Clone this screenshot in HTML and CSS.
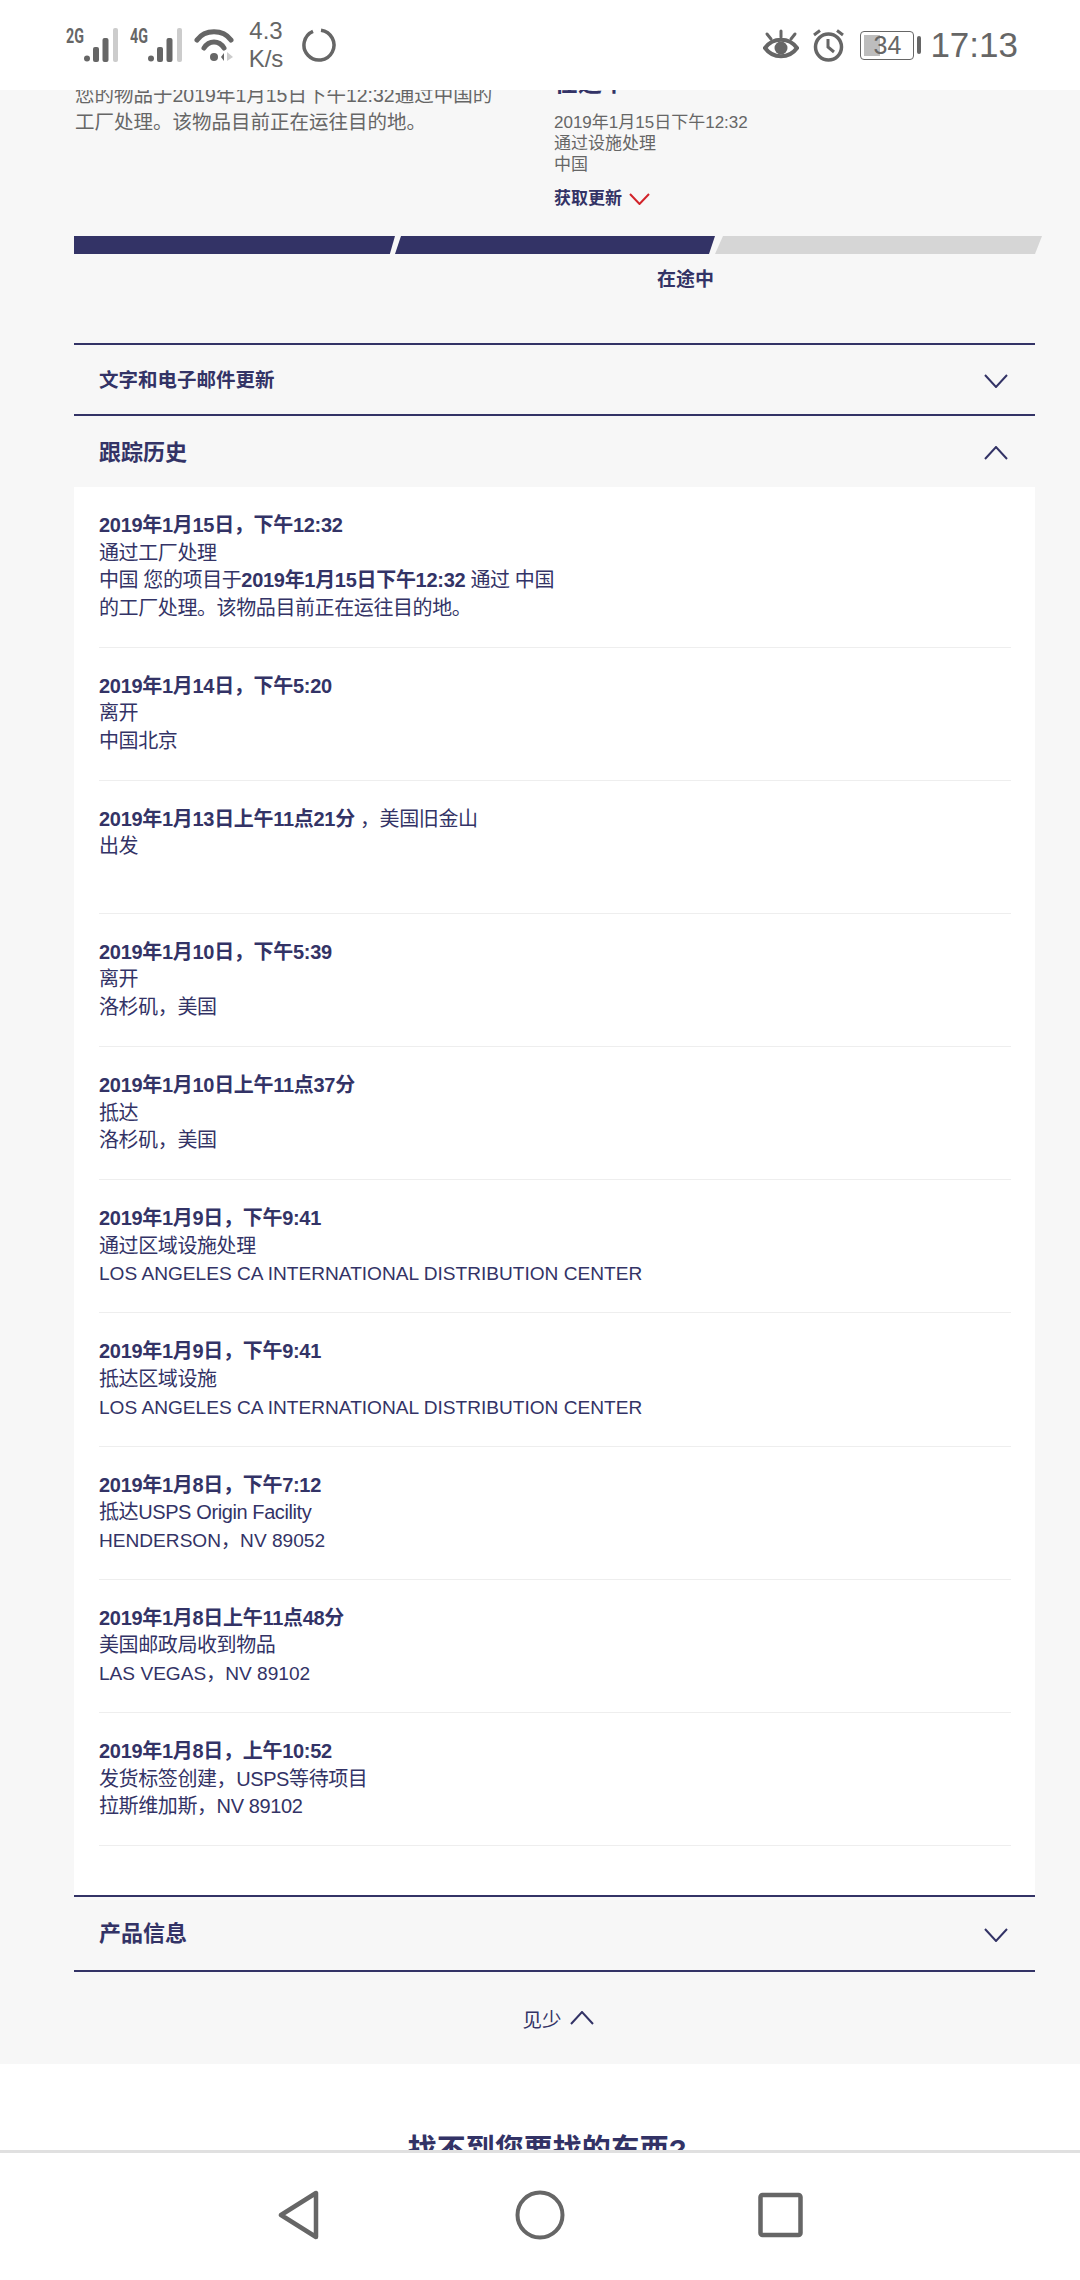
FILE: index.html
```html
<!DOCTYPE html>
<html lang="zh-CN">
<head>
    <meta charset="UTF-8">
    <meta name="viewport" content="width=device-width, initial-scale=1.0">
    <title>跟踪历史</title>
    <link rel="stylesheet" href="styles.css">
</head>
<body>
    <div class="phone">
        <!-- 状态栏 -->
        <header class="status-bar">
            <div class="status-left">
                <div class="sim">
                    <span class="sim-label">2G</span>
                    <svg class="signal" viewBox="0 0 36 34"><g fill="#666"><circle cx="3" cy="30.500" r="3"/><rect x="9" y="19" width="6" height="15" rx="2"/><rect x="18.500" y="10" width="6" height="24" rx="2"/></g><rect x="29" y="0" width="5" height="34" rx="2" fill="#ccc"/></svg>
                </div>
                <div class="sim">
                    <span class="sim-label">4G</span>
                    <svg class="signal" viewBox="0 0 36 34"><g fill="#666"><circle cx="3" cy="30.500" r="3"/><rect x="9" y="19" width="6" height="15" rx="2"/><rect x="18.500" y="10" width="6" height="24" rx="2"/></g><rect x="29" y="0" width="5" height="34" rx="2" fill="#ccc"/></svg>
                </div>
                <svg class="wifi" viewBox="0 0 40 34">
                    <g fill="none" stroke="#666" stroke-width="5" stroke-linecap="round">
                        <path d="M3 12C11 1 29 1 37 12"/>
                        <path d="M10 20C15 12 25 12 30 20"/>
                    </g>
                    <circle cx="20" cy="29" r="4" fill="#666"/>
                    <path d="M30 33V25L27 29Z" fill="#666"/>
                    <path d="M33 33V24L39 29Z" fill="#ccc"/>
                </svg>
                <div class="net-speed">4.3<br>K/s</div>
                <svg class="spinner" viewBox="0 0 34 34"><path d="M19 2.200A15 15 0 1 1 11 3.300" fill="none" stroke="#666" stroke-width="3.500"/></svg>
            </div>
            <div class="status-right">
                <svg class="eye" viewBox="0 0 36 32">
                    <path d="M2 19C10 8 26 8 34 19C26 30 10 30 2 19Z" fill="none" stroke="#666" stroke-width="4"/>
                    <circle cx="18" cy="19" r="6.500" fill="#666"/>
                    <g stroke="#666" stroke-width="3" stroke-linecap="round"><path d="M18 2V8"/><path d="M4 5L8 10"/><path d="M32 5L28 10"/></g>
                </svg>
                <svg class="alarm" viewBox="0 0 33 33">
                    <circle cx="16.500" cy="18" r="13" fill="none" stroke="#666" stroke-width="3.500"/>
                    <path d="M16 10V18L22 23" fill="none" stroke="#666" stroke-width="3"/>
                    <path d="M2 6L8 1.500M31 6L25 1.500" fill="none" stroke="#666" stroke-width="3"/>
                </svg>
                <div class="battery">
                    <div class="battery-body"><div class="battery-level"></div><span class="battery-num">34</span></div>
                    <div class="battery-nub"></div>
                </div>
                <div class="clock">17:13</div>
            </div>
        </header>

        <main class="viewport">
            <div class="page">
                <section class="shipment">
                    <div class="summary">
                        <p class="summary-text">您的物品于2019年1月15日下午12:32通过中国的工厂处理。该物品目前正在运往目的地。</p>
                        <div class="latest">
                            <h2 class="latest-title">在途中</h2>
                            <p class="latest-info">2019年1月15日下午12:32<br>通过设施处理<br>中国</p>
                            <a class="updates-link">获取更新
                                <svg class="chev-red" viewBox="0 0 21 12"><path d="M1 1L10.500 11L20 1" fill="none" stroke="#d2232a" stroke-width="2"/></svg>
                            </a>
                        </div>
                    </div>

                    <div class="progress">
                        <div class="seg seg-first"></div>
                        <div class="seg seg-mid"></div>
                        <div class="seg seg-last"></div>
                    </div>
                    <div class="progress-label">在途中</div>

                    <div class="acc-head acc-small">
                        <span>文字和电子邮件更新</span>
                        <svg class="chev" viewBox="0 0 24 14"><path d="M1 1L12 13L23 1" fill="none" stroke="#333366" stroke-width="2"/></svg>
                    </div>
                    <div class="acc-head acc-open">
                        <span>跟踪历史</span>
                        <svg class="chev" viewBox="0 0 24 14"><path d="M1 13L12 1L23 13" fill="none" stroke="#333366" stroke-width="2"/></svg>
                    </div>

                    <div class="history">
                        <div class="event event-first">
                            <strong>2019年1月15日，下午12:32</strong><br>
                            通过工厂处理<br>
                            中国 您的项目于<strong>2019年1月15日下午12:32</strong> 通过 中国<br>
                            的工厂处理。该物品目前正在运往目的地。
                        </div>
                        <div class="event"><strong>2019年1月14日，下午5:20</strong><br>离开<br>中国北京</div>
                        <div class="event"><strong>2019年1月13日上午11点21分</strong> ，美国旧金山<br>出发<br>&nbsp;</div>
                        <div class="event"><strong>2019年1月10日，下午5:39</strong><br>离开<br>洛杉矶，美国</div>
                        <div class="event"><strong>2019年1月10日上午11点37分</strong><br>抵达<br>洛杉矶，美国</div>
                        <div class="event"><strong>2019年1月9日，下午9:41</strong><br>通过区域设施处理<br><span class="addr">LOS ANGELES CA INTERNATIONAL DISTRIBUTION CENTER</span></div>
                        <div class="event"><strong>2019年1月9日，下午9:41</strong><br>抵达区域设施<br><span class="addr">LOS ANGELES CA INTERNATIONAL DISTRIBUTION CENTER</span></div>
                        <div class="event"><strong>2019年1月8日，下午7:12</strong><br>抵达USPS Origin Facility<br><span class="addr">HENDERSON，NV 89052</span></div>
                        <div class="event"><strong>2019年1月8日上午11点48分</strong><br>美国邮政局收到物品<br><span class="addr">LAS VEGAS，NV 89102</span></div>
                        <div class="event"><strong>2019年1月8日，上午10:52</strong><br>发货标签创建，USPS等待项目<br>拉斯维加斯，NV 89102</div>
                    </div>

                    <div class="acc-head acc-product">
                        <span>产品信息</span>
                        <svg class="chev" viewBox="0 0 24 14"><path d="M1 1L12 13L23 1" fill="none" stroke="#333366" stroke-width="2"/></svg>
                    </div>
                    <div class="see-less">
                        见少
                        <svg class="chev" viewBox="0 0 24 14"><path d="M1 13L12 1L23 13" fill="none" stroke="#333366" stroke-width="2"/></svg>
                    </div>
                </section>

                <section class="help">
                    <h2>找不到您要找的东西?</h2>
                </section>
            </div>
        </main>

        <!-- 导航栏 -->
        <nav class="nav-bar">
            <svg class="nav-back" viewBox="0 0 41 50"><path d="M38 3V47L3 25Z" fill="none" stroke="#666" stroke-width="4.500" stroke-linejoin="round"/></svg>
            <svg class="nav-home" viewBox="0 0 50 50"><circle cx="25" cy="25" r="22.500" fill="none" stroke="#666" stroke-width="4"/></svg>
            <svg class="nav-recent" viewBox="0 0 45 46"><rect x="2.500" y="3" width="40" height="40" rx="2" fill="none" stroke="#666" stroke-width="4.500"/></svg>
        </nav>
    </div>
</body>
</html>
```
FILE: styles.css
```css
* {
    box-sizing: border-box;
}

body {
    margin: 0;
    background-color: #ffffff;
    font-family: "Liberation Sans", "Noto Sans CJK SC", sans-serif;
    color: #333366;
}

.phone {
    display: flex;
    flex-direction: column;
    width: 1080px;
    height: 2280px;
    overflow: hidden;
}

/* status bar */
.status-bar {
    flex: 0 0 90px;
    display: flex;
    justify-content: space-between;
    align-items: center;
    padding: 0 62px 0 66px;
    background-color: #ffffff;
    color: #666666;
}

.status-left,
.status-right {
    display: flex;
    align-items: center;
}

.sim {
    display: flex;
    align-items: flex-start;
    width: 64px;
    height: 34px;
}

.sim-label {
    width: 18px;
    font-family: "Roboto", sans-serif;
    font-size: 21px;
    line-height: 17px;
    font-weight: 700;
    transform: scaleX(0.68);
    transform-origin: left top;
    white-space: nowrap;
}

.signal {
    width: 36px;
    height: 34px;
}

.wifi {
    width: 40px;
    height: 34px;
}

.net-speed {
    width: 54px;
    margin-left: 5px;
    font-size: 24px;
    line-height: 28px;
    text-align: center;
}

.spinner {
    width: 34px;
    height: 34px;
    margin-left: 9px;
}

.eye {
    width: 36px;
    height: 32px;
}

.alarm {
    width: 33px;
    height: 33px;
    margin-left: 13px;
}

.battery {
    display: flex;
    align-items: center;
    margin-left: 15px;
}

.battery-body {
    position: relative;
    width: 54px;
    height: 29px;
    border: 1.5px solid #666666;
    border-radius: 4px;
    padding: 3px;
}

.battery-level {
    width: 34%;
    height: 100%;
    background-color: #bdbdbd;
}

.battery-num {
    position: absolute;
    top: 0;
    left: 0;
    width: 100%;
    text-align: center;
    font-size: 25px;
    line-height: 27px;
}

.battery-nub {
    width: 4px;
    height: 18px;
    margin-left: 3px;
    border-radius: 2px;
    background-color: #666666;
}

.clock {
    margin-left: 9px;
    font-size: 35px;
    line-height: 42px;
}

/* scrolled area */
.viewport {
    flex: 1;
    overflow: hidden;
}

.page {
    margin-top: -25px;
}

.shipment {
    height: 1999px;
    padding: 0 45px 0 74px;
    background-color: #f7f7f7;
}

.summary {
    display: flex;
    height: 145px;
}

.summary-text {
    width: 430px;
    margin: 0 50px 0 0;
    padding: 17px 0 0 1px;
    font-size: 19.500px;
    line-height: 27px;
    color: #666666;
}

.latest {
    flex: 1;
}

.latest-title {
    margin: 0 0 11px;
    font-size: 24px;
    line-height: 36px;
    font-weight: 700;
}

.latest-info {
    margin: 0;
    font-size: 17px;
    line-height: 21px;
    color: #666666;
}

.updates-link {
    display: flex;
    align-items: center;
    gap: 7px;
    margin-top: 12px;
    font-size: 17px;
    line-height: 24px;
    font-weight: 700;
}

.chev-red {
    width: 21px;
    height: 12px;
}

/* progress */
.progress {
    display: flex;
    height: 18px;
    margin: 26px -7px 0 0;
}

.seg {
    height: 18px;
    background-color: #333366;
}

.seg-first {
    width: 321px;
    clip-path: polygon(0 0, 100% 0, 98.4% 100%, 0 100%);
}

.seg-mid {
    width: 320px;
    clip-path: polygon(6px 0, 100% 0, 314px 100%, 0 100%);
}

.seg-last {
    width: 327px;
    background-color: #d6d6d6;
    clip-path: polygon(8px 0, 100% 0, 320px 100%, 0 100%);
}

.progress-label {
    width: 640px;
    margin-top: 14px;
    font-size: 19px;
    line-height: 24px;
    font-weight: 700;
    text-align: right;
}

/* accordion */
.acc-head {
    display: flex;
    justify-content: space-between;
    align-items: center;
    padding: 0 27px 0 25px;
    border-top: 2px solid #333366;
    font-size: 22px;
    font-weight: 700;
}

.acc-head span {
    padding-bottom: 3px;
}

.acc-head .chev {
    margin-top: 2px;
}

.acc-small {
    height: 71px;
    margin-top: 51px;
    font-size: 19.500px;
}

.acc-open {
    height: 73px;
}

.acc-product {
    height: 75px;
}

.acc-product span {
    padding-bottom: 5px;
}

.chev {
    width: 24px;
    height: 14px;
}

.history {
    height: 1408px;
    padding: 0 24px 0 25px;
    background-color: #ffffff;
}

.event {
    height: 133.200px;
    padding-top: 25px;
    border-bottom: 1px solid #eeeeee;
    font-size: 20px;
    line-height: 27.600px;
    letter-spacing: -0.4px;
}

.event-first {
    height: 160.500px;
}

.event strong {
    font-weight: 700;
    letter-spacing: -0.3px;
}

.event .addr {
    font-size: 19.100px;
    letter-spacing: 0;
}

.see-less {
    display: flex;
    justify-content: center;
    align-items: center;
    gap: 8px;
    height: 94px;
    padding-left: 7px;
    border-top: 2px solid #333366;
    font-size: 19.500px;
}

/* next section, cut off by the nav bar */
.help {
    padding: 68px 0 0 14px;
    text-align: center;
}

.help h2 {
    margin: 0;
    font-size: 29px;
    line-height: 36px;
    font-weight: 700;
}

/* nav bar */
.nav-bar {
    flex: 0 0 130px;
    display: flex;
    justify-content: center;
    align-items: center;
    padding-bottom: 3px;
    border-top: 3px solid #e0e0e0;
    background-color: #ffffff;
}

.nav-back {
    width: 41px;
    height: 50px;
}

.nav-home {
    width: 50px;
    height: 50px;
    margin: 0 193px 0 196px;
}

.nav-recent {
    width: 45px;
    height: 46px;
}
```
